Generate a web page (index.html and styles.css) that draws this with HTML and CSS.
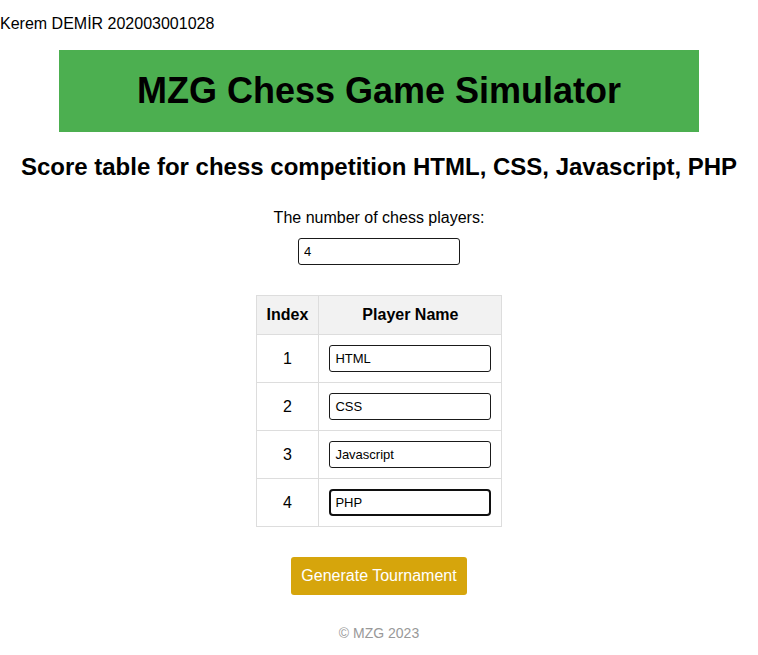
FILE: index.html
```html
<!DOCTYPE html>
<html lang="en">
<head>
<meta charset="utf-8">
<title>MZG Chess Game Simulator</title>
<link rel="stylesheet" href="styles.css">
</head>
<body>
<p class="author">Kerem DEMİR 202003001028</p>
<header class="banner">
  <h1 class="banner-title">MZG Chess Game Simulator</h1>
</header>
<main class="main">
  <h2 class="subtitle">Score table for chess competition HTML, CSS, Javascript, PHP</h2>
  <label class="count-label" for="count">The number of chess players:</label>
  <input class="field" id="count" type="text" value="4">
  <table class="players">
    <thead>
      <tr><th class="col-index">Index</th><th>Player Name</th></tr>
    </thead>
    <tbody>
      <tr><td class="col-index">1</td><td><input class="field" type="text" value="HTML"></td></tr>
      <tr><td class="col-index">2</td><td><input class="field" type="text" value="CSS"></td></tr>
      <tr><td class="col-index">3</td><td><input class="field" type="text" value="Javascript"></td></tr>
      <tr><td class="col-index">4</td><td><input class="field field-focus" type="text" value="PHP"></td></tr>
    </tbody>
  </table>
  <button class="generate" type="button">Generate Tournament</button>
  <footer class="footer">© MZG 2023</footer>
</main>
</body>
</html>
```
FILE: styles.css
```css
html, body {
  margin: 0;
  padding: 0;
  background: #ffffff;
  font-family: "Liberation Sans", Arial, sans-serif;
  color: #000;
}

.author {
  margin: 0;
  padding-top: 15px;
  font-size: 16px;
  line-height: 18px;
}

.banner {
  width: 640px;
  margin: 17px auto 0;
  background: #4caf50;
  padding: 20px 0;
  box-sizing: border-box;
  height: 82px;
}

.banner-title {
  margin: 0;
  text-align: center;
  font-size: 36px;
  line-height: 42px;
  font-weight: bold;
}

.main {
  display: flex;
  flex-direction: column;
  align-items: center;
}

.subtitle {
  margin: 21px 0 0;
  font-size: 24px;
  line-height: 28px;
  font-weight: bold;
  text-align: center;
}

.count-label {
  margin-top: 28px;
  font-size: 16px;
  line-height: 18px;
}

.field {
  box-sizing: border-box;
  width: 162px;
  height: 27px;
  margin: 0;
  padding: 0 5px;
  border: 1px solid #1a1a1a;
  border-radius: 3px;
  font-family: "Liberation Sans", Arial, sans-serif;
  font-size: 13px;
  color: #000;
  background: #fff;
  outline: none;
}

#count {
  margin-top: 11px;
}

.field-focus {
  border: 2px solid #101010;
  padding: 0 4px;
  border-radius: 4px;
}

.players {
  margin-top: 30px;
  border-collapse: collapse;
}

.players th,
.players td {
  border: 1px solid #dddddd;
  padding: 10px;
  text-align: center;
  font-size: 16px;
  line-height: 18px;
}

.players th {
  background: #f2f2f2;
  font-weight: bold;
}

.players td .field {
  display: block;
}

.generate {
  margin-top: 30px;
  padding: 10px;
  border: none;
  border-radius: 3px;
  background: #d6a50c;
  color: #ffffff;
  font-family: "Liberation Sans", Arial, sans-serif;
  font-size: 16px;
  line-height: 18px;
  cursor: pointer;
}

.footer {
  margin-top: 30px;
  font-size: 14px;
  line-height: 16px;
  color: #999999;
}
```
